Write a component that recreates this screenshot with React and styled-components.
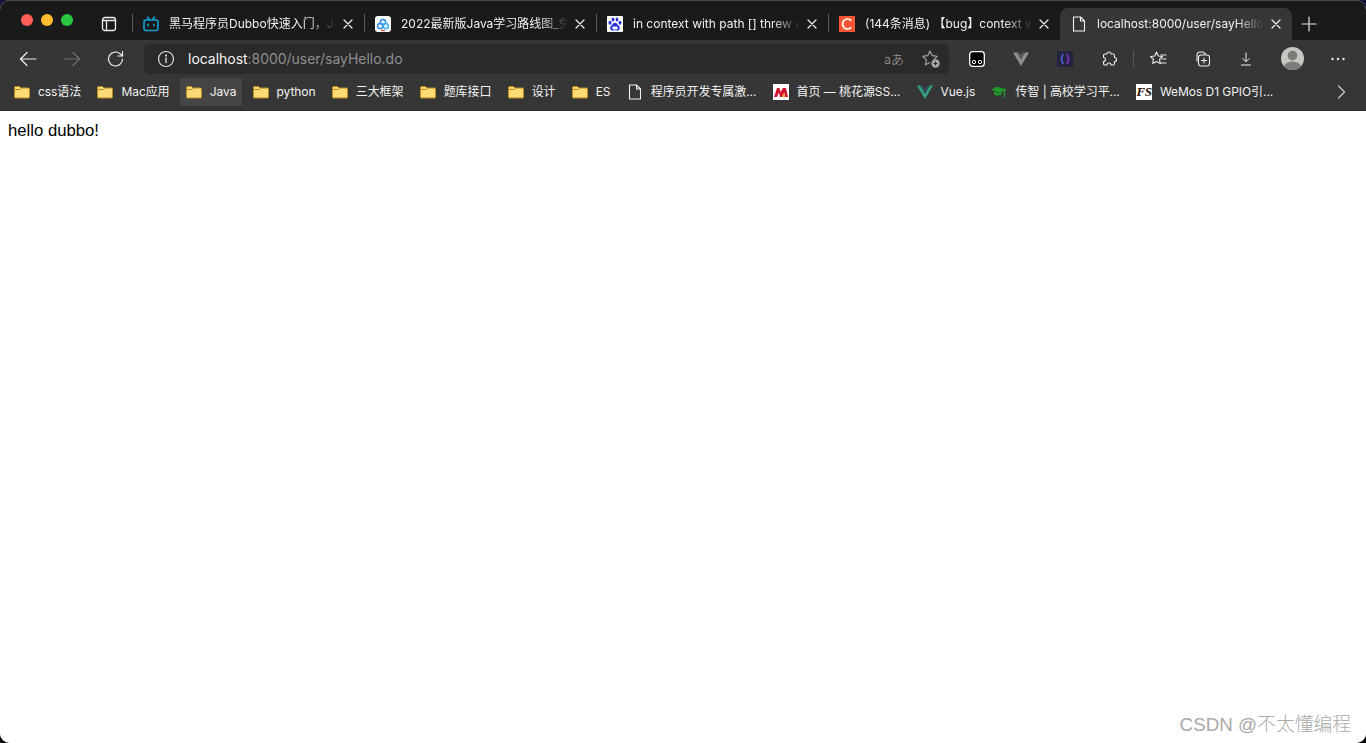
import React from 'react';
import styled, { createGlobalStyle } from 'styled-components';

const Global = createGlobalStyle`
  html, body { margin: 0; padding: 0; height: 100%; background: #14143c; overflow: hidden; }
  #root { height: 100%; }
  * { box-sizing: border-box; }
`;
const ui = `Inter, "Noto Sans CJK SC", sans-serif`;

const Screen = styled.div`position: relative; width: 1366px; height: 743px; background: linear-gradient(#14143c 0 50%, #08080c 50%);`;
const Window = styled.div`
  width: 100%; height: 100%; border-radius: 10px; overflow: hidden;
  display: flex; flex-direction: column; background: #fff;
`;
const TabStrip = styled.div`
  height: 40px; flex: none; background: #1a1a1a; border-top: 1px solid #4a4a4a;
  display: flex; align-items: flex-end;
`;
const Lights = styled.div`display: flex; gap: 8px; padding: 0 0 14px 21px; width: 100px; flex: none; align-self: flex-end;`;
const Light = styled.span`width: 12px; height: 12px; border-radius: 50%; background: ${p => p.$c};`;
const SideBtn = styled.div`width: 32px; height: 32px; flex: none; display: flex; align-items: center; justify-content: center; color: #eeeeee; margin-left: -7px; margin-right: 7px;`;
const Tab = styled.div`
  width: 232px; height: 32px; flex: none; display: flex; align-items: center; position: relative;
  padding: 0 8px 0 11px; color: #f0f0f0;
  background: ${p => (p.$active ? '#363636' : 'transparent')};
  border-radius: ${p => (p.$active ? '8px 8px 0 0' : '0')};
`;
const TabSep = styled.span`position: absolute; left: 0; top: 6px; bottom: 8px; width: 1px; background: #5a5a5a;`;
const Fav = styled.span`width: 16px; height: 16px; flex: none; display: flex; align-items: center; justify-content: center;`;
const TabTitle = styled.span`
  flex: 1; margin-left: 10px; font: 12px/16px ${ui}; white-space: nowrap; overflow: hidden; color: #f0f0f0;
  -webkit-mask-image: linear-gradient(90deg, #000 calc(100% - 32px), transparent calc(100% - 4px));
  mask-image: linear-gradient(90deg, #000 calc(100% - 32px), transparent calc(100% - 4px));
`;
const Close = styled.span`width: 16px; height: 16px; flex: none; color: #f0f0f0; display: flex; align-items: center; justify-content: center;`;
const NewTab = styled.div`width: 34px; height: 32px; display: flex; align-items: center; justify-content: center; color: #e8e8e8;`;

const Toolbar = styled.div`height: 37px; flex: none; background: #363636; display: flex; align-items: center; padding: 0 8px 0 6px;`;
const Tool = styled.div`
  width: 44px; height: 30px; flex: none; display: flex; align-items: center; justify-content: center;
  color: ${p => p.$dim ? '#6f6f6f' : '#ececec'};
`;
const NavTools = styled.div`display: flex; margin-right: 6px;`;
const Address = styled.div`
  width: 805px; height: 30px; flex: none; background: #2a2a2a; border-radius: 5px;
  display: flex; align-items: center; padding: 0 8px 0 13px; color: #dcdcdc;
`;
const Url = styled.div`flex: 1; margin-left: 13px; font: 13.95px/20px ${ui}; color: #8f8f8f; white-space: nowrap;`;
const Host = styled.span`color: #f4f4f4;`;
const AddrIcon = styled.span`width: 20px; height: 20px; display: flex; align-items: center; justify-content: center; color: #a8a8a8; margin-left: 17px;`;
const Translate = styled(AddrIcon)`font: 300 13px/20px "Noto Sans CJK JP", sans-serif; color: #a4a4a4; white-space: nowrap;`;
const Ext = styled.div`display: flex; align-items: center; padding-left: 6px;`;
const ToolSep = styled.span`width: 1px; height: 16px; background: #5a5a5a; margin: 0 2px;`;
const Avatar = styled.div`width: 48px; height: 30px; display: flex; align-items: center; justify-content: center;`;

const BookmarkBar = styled.div`
  height: 34px; flex: none; background: #363636; border-bottom: 1px solid #2a2a2a;
  display: flex; align-items: flex-start; padding: 1px 0 0 8px; gap: 4.2px; position: relative;
`;
const Mark = styled.div`
  height: 28px; flex: none; display: flex; align-items: center; padding: 0 6px; border-radius: 2px;
  background: ${p => p.$hover ? '#454545' : 'transparent'}; font: 12px/16px ${ui}; color: #f2f2f2;
  white-space: nowrap; letter-spacing: -0.06px;
`;
const MarkIcon = styled.span`width: 16px; height: 16px; flex: none; margin-right: 8px; display: flex; align-items: center; justify-content: center;`;
const More = styled.div`margin-left: auto; width: 50px; height: 28px; display: flex; align-items: center; justify-content: center; color: #ccc;`;

const Page = styled.div`flex: 1; background: #fff; padding: 10px 8px; font: 16.7px/19px "Liberation Sans", Arial, sans-serif; color: #000;`;
const Watermark = styled.div`
  position: absolute; right: 15px; bottom: 7px;
  font: 300 18.8px/22px "Liberation Sans", "Noto Sans CJK SC", sans-serif; color: #a9a9a9; white-space: nowrap;
`;
const FsLogo = styled.span`
  width: 16px; height: 16px; background: #fff; color: #2a1008; display: block; text-align: center; letter-spacing: -0.5px;
  font: italic 700 13px/16px "Liberation Serif", serif;
`;

const S = ({ size = 20, sw = 1.2, children, vb = 20 }) => (
  <svg width={size} height={size} viewBox={`0 0 ${vb} ${vb}`} fill="none" stroke="currentColor" strokeWidth={sw} strokeLinecap="round" strokeLinejoin="round">{children}</svg>
);
const X = () => <S size={12} vb={12} sw={1.2}><path d="M2 2l8 8M10 2l-8 8" /></S>;

const Folder = () => (
  <svg width="16" height="16" viewBox="0 0 16 16">
    <path d="M.5 3.500a1 1 0 0 1 1-1h4l1.500 1.500h7.500a1 1 0 0 1 1 1v8a1 1 0 0 1-1 1h-13a1 1 0 0 1-1-1z" fill="#fedb76" stroke="#b98a1e" />
    <path d="M1 5.500h5.500L8 4" fill="none" stroke="#b98a1e" />
  </svg>
);
const Doc = ({ s = 16 }) => (
  <svg width={s} height={s} viewBox="0 0 16 16" fill="none" stroke="#f2f2f2" strokeWidth="1.100" strokeLinejoin="round">
    <path d="M2.500 1h7l4 4v10h-11z" /><path d="M9.500 1v4h4" />
  </svg>
);
const Bili = () => (
  <svg width="16" height="16" viewBox="0 0 16 16" fill="none" stroke="#14a0d8" strokeWidth="1.600" strokeLinecap="round">
    <rect x="1" y="4" width="14" height="10.500" rx="2" />
    <path d="M4.500 1.200L6.500 3.600M11.500 1.200L9.500 3.600M5 8.200v1.600M11 8.200v1.600" />
  </svg>
);
const Yuque = () => (
  <svg width="16" height="16" viewBox="0 0 16 16">
    <rect width="16" height="16" rx="3" fill="#fff" />
    <circle cx="8" cy="6" r="2.600" fill="none" stroke="#2a8cf0" strokeWidth="1.500" />
    <circle cx="5.200" cy="10" r="2.600" fill="none" stroke="#2a8cf0" strokeWidth="1.500" />
    <circle cx="10.800" cy="10" r="2.600" fill="none" stroke="#3cb0ee" strokeWidth="1.500" />
    <path d="M6 14.500h4" stroke="#e8403a" strokeWidth="1.200" />
  </svg>
);
const Baidu = () => (
  <svg width="16" height="16" viewBox="0 0 16 16">
    <rect width="16" height="16" rx="1" fill="#fff" />
    <g fill="#2932e1">
      <ellipse cx="3" cy="6.800" rx="1.500" ry="2" /><ellipse cx="6" cy="3.400" rx="1.400" ry="2" />
      <ellipse cx="10" cy="3.400" rx="1.400" ry="2" /><ellipse cx="13" cy="6.800" rx="1.500" ry="2" />
      <path d="M8 6.800c-2 0-2.500 2-4 3.200-1.600 1.400-.8 4.600 1.600 4.600 1 0 1.600-.3 2.400-.3s1.400.3 2.400.3c2.400 0 3.200-3.200 1.600-4.600C10.500 8.800 10 6.800 8 6.800z" />
    </g>
    <rect x="5.500" y="10.500" width="5" height="3" rx=".8" fill="#fff" />
  </svg>
);
const Csdn = () => (
  <svg width="16" height="16" viewBox="0 0 16 16">
    <rect width="16" height="16" fill="#fc5531" />
    <path d="M12.200 4.600A5 5 0 1 0 12.200 11.400" fill="none" stroke="#fff" strokeWidth="1.700" />
  </svg>
);
const Marks = () => (
  <svg width="16" height="16" viewBox="0 0 16 16">
    <rect width="16" height="16" fill="#fff" />
    <path d="M1 13L4 4h2.500l1 4L10 4h3l2 9h-2.800l-1-4.500L9 13H7L6 8.500 4 13z" fill="#d0122e" />
    <path d="M9 13l2.200-4.500 1 4.500z" fill="#f0a020" />
  </svg>
);
const Vue = () => (
  <svg width="16" height="16" viewBox="0 0 16 16">
    <path d="M0 1.500h3.200L8 9.700l4.800-8.200H16L8 15z" fill="#35a07f" />
    <path d="M3.200 1.500h2.700L8 5.200l2.100-3.700h2.700L8 9.700z" fill="#35495e" />
  </svg>
);
const Cap = () => (
  <svg width="16" height="16" viewBox="0 0 16 16">
    <path d="M0 5.500l6-2.800 9.500 2.800L8.500 9z" fill="#1d9a2a" />
    <path d="M3 7.500v2.500c2 2.200 5 2 7.500.5V7.500l-2 2z" fill="#1d9a2a" />
    <path d="M13.500 6v7.500" stroke="#1d9a2a" strokeWidth="1.400" />
  </svg>
);

const tabs = [
  { icon: <Bili />, title: '黑马程序员Dubbo快速入门，Java分布式框架dubbo教程' },
  { icon: <Yuque />, title: '2022最新版Java学习路线图_免费视频教程' },
  { icon: <Baidu />, title: 'in context with path [] threw exception' },
  { icon: <Csdn />, title: '(144条消息) 【bug】context with path' },
];
const marks = [
  ['css语法'], ['Mac应用'], ['Java', null, true], ['python'], ['三大框架'], ['题库接口'], ['设计'], ['ES'],
  ['程序员开发专属激...', <Doc />], ['首页 — 桃花源SS...', <Marks />], ['Vue.js', <Vue />], ['传智 | 高校学习平...', <Cap />],
  ['WeMos D1 GPIO引...', <FsLogo>FS</FsLogo>],
];

export default function App() {
  return (
    <Screen>
      <Global />
      <Window>
        <TabStrip>
          <Lights>
            <Light $c="#ff5f57" /><Light $c="#febc2e" /><Light $c="#28c840" />
          </Lights>
          <SideBtn>
            <S size={16} vb={16} sw={1.300}><rect x="1.500" y="1.500" width="13" height="13" rx="2.500" /><path d="M5.500 4.500v10M1.500 4.500h13" /></S>
          </SideBtn>
          {tabs.map((t, i) => (
            <Tab key={i}>
              <TabSep />
              <Fav>{t.icon}</Fav>
              <TabTitle>{t.title}</TabTitle>
              <Close><X /></Close>
            </Tab>
          ))}
          <Tab $active>
            <Fav><Doc /></Fav>
            <TabTitle>localhost:8000/user/sayHello.do</TabTitle>
            <Close><X /></Close>
          </Tab>
          <NewTab><S size={16} vb={16} sw={1.200}><path d="M8 1v14M1 8h14" /></S></NewTab>
        </TabStrip>
        <Toolbar>
          <NavTools>
            <Tool><S><path d="M18 10H2.500M9 3.500L2.500 10 9 16.500" /></S></Tool>
            <Tool $dim><S><path d="M2 10h15.500M11 3.500l6.500 6.500-6.500 6.500" /></S></Tool>
            <Tool><S><path d="M16.500 10a7 7 0 1 1-2.200-5.100L16.500 7M16.500 2.500V7H12" /></S></Tool>
          </NavTools>
          <Address>
            <S size={18} vb={18}><circle cx="9" cy="9" r="7.500" /><path d="M9 8.200v4.300" strokeWidth="1.400" /><circle cx="9" cy="5.600" r=".5" fill="currentColor" /></S>
            <Url><Host>localhost</Host>:8000/user/sayHello.do</Url>
            <Translate>aあ</Translate>
            <AddrIcon>
              <svg width="20" height="20" viewBox="0 0 20 20" fill="none" stroke="currentColor" strokeWidth="1.100" strokeLinejoin="round">
                <path d="M12.600 10.800L16.200 7.300 11.200 6.600 9 2 6.800 6.600 1.800 7.300 5.400 10.800 4.500 15.800 9 13.400" />
                <circle cx="14.500" cy="14.500" r="4.200" fill="#a8a8a8" stroke="none" />
                <path d="M14.500 12.500v4M12.500 14.500h4" stroke="#2a2a2a" />
              </svg>
            </AddrIcon>
          </Address>
          <Ext>
            <Tool>
              <svg width="16" height="16" viewBox="0 0 16 16">
                <rect x=".7" y=".7" width="14.600" height="14.600" rx="3" fill="#000" stroke="#fff" strokeWidth="1.300" />
                <circle cx="5" cy="11" r="1.700" fill="none" stroke="#fff" /><circle cx="11" cy="11" r="1.700" fill="none" stroke="#fff" />
              </svg>
            </Tool>
            <Tool>
              <svg width="16" height="16" viewBox="0 0 16 16">
                <path d="M0 1.500h4L8 8.500l4-7h4L8 15z" fill="#8f8f8f" />
                <path d="M4 1.500h2.500L8 4.500l1.500-3H12L8 8.500z" fill="#5c5c5c" />
              </svg>
            </Tool>
            <Tool>
              <svg width="16" height="16" viewBox="0 0 16 16" fill="none" strokeWidth="1.300">
                <rect width="16" height="16" fill="#232340" />
                <path d="M6 3L4.300 8 6 13" stroke="#5570f0" /><path d="M10 3l1.700 5L10 13" stroke="#a030e0" />
              </svg>
            </Tool>
            <Tool>
              <S size={16} vb={16} sw={1.100}><path d="M6 3a2 2 0 0 1 4 0h2a1.500 1.500 0 0 1 1.500 1.500v2a2 2 0 0 1 0 4v2a1.500 1.500 0 0 1-1.500 1.500h-2a2 2 0 0 0-4 0h-2a1.500 1.500 0 0 1-1.500-1.500v-2a2 2 0 0 0 0-4v-2a1.500 1.500 0 0 1 1.500-1.500z" /></S>
            </Tool>
            <ToolSep />
            <Tool>
              <S size={18} vb={18} sw={1.100}><path d="M7.500 2l1.800 4 4.200.5-3 2.900.8 4.100-3.800-2.100-3.800 2.100.8-4.100-3-2.900L5.700 6zM12 5h5M13 9h4M12 13h5" /></S>
            </Tool>
            <Tool>
              <S size={18} vb={18} sw={1.100}><path d="M4 11V5a3 3 0 0 1 3-3h3l2.500 2" /><rect x="5.500" y="5" width="11" height="11" rx="2.500" /><path d="M11 8v5M8.500 10.500h5" /></S>
            </Tool>
            <Tool><S size={16} vb={16} sw={1}><path d="M8 2v8.500M4.800 7.500L8 10.700l3.200-3.200M3.500 14h9" /></S></Tool>
            <Avatar>
              <svg width="23" height="23" viewBox="0 0 23 23">
                <defs><clipPath id="av"><circle cx="11.500" cy="11.500" r="11.500" /></clipPath></defs>
                <circle cx="11.500" cy="11.500" r="11.500" fill="#c8c6c2" />
                <g clipPath="url(#av)" fill="#7e7c78"><circle cx="11.500" cy="8.500" r="4.800" /><ellipse cx="11.500" cy="20" rx="8.500" ry="5.500" /></g>
              </svg>
            </Avatar>
            <Tool>
              <svg width="16" height="4" viewBox="0 0 16 4" fill="#ececec"><circle cx="2.500" cy="2" r="1.200" /><circle cx="8" cy="2" r="1.200" /><circle cx="13.500" cy="2" r="1.200" /></svg>
            </Tool>
          </Ext>
        </Toolbar>
        <BookmarkBar>
          {marks.map(([label, icon, hover], i) => (
            <Mark key={i} $hover={hover}>
              <MarkIcon>{icon || <Folder />}</MarkIcon>{label}
            </Mark>
          ))}
          <More><S size={16} vb={16} sw={1.200}><path d="M5.500 2l6 6-6 6" /></S></More>
        </BookmarkBar>
        <Page>hello dubbo!</Page>
      </Window>
      <Watermark>CSDN @不太懂编程</Watermark>
    </Screen>
  );
}
